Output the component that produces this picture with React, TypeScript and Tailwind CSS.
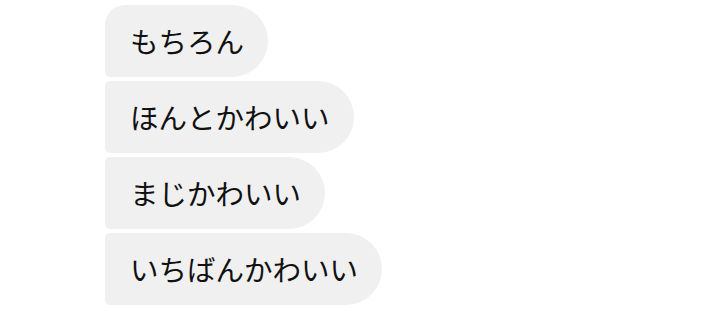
import React from 'react';

const messages = ['もちろん', 'ほんとかわいい', 'まじかわいい', 'いちばんかわいい'];

const App: React.FC = () => {
  return (
    <div
      className="w-[720px] h-[309px] bg-white pt-[5px] pl-[105px] flex flex-col items-start gap-[4px]"
      style={{ fontFamily: '"Noto Sans CJK JP", "Noto Sans", sans-serif' }}
    >
      {messages.map((text, i) => (
        <div
          key={text}
          className={`h-[72px] flex items-center pl-[25px] pr-[24px] bg-[#f0f0f0] text-[#111111] text-[28.5px] font-normal whitespace-nowrap rounded-r-[36px] ${
            i === 0 ? 'rounded-tl-[20px] rounded-bl-[5px]' : 'rounded-l-[5px]'
          }`}
        >
          {text}
        </div>
      ))}
    </div>
  );
};

export default App;
